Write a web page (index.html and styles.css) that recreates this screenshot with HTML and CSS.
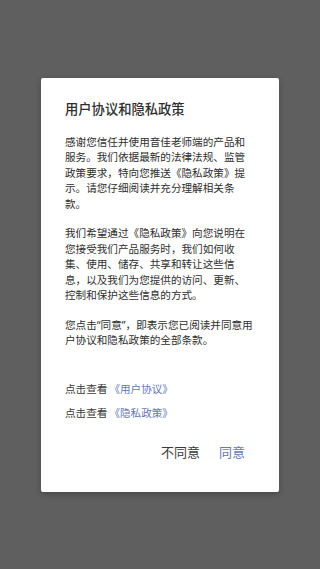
FILE: index.html
```html
<!DOCTYPE html>
<html lang="zh-CN">
<head>
    <meta charset="UTF-8">
    <meta name="viewport" content="width=device-width, initial-scale=1.0">
    <title>用户协议和隐私政策</title>
    <link rel="stylesheet" href="styles.css">
</head>
<body>
    <div class="overlay">
        <div class="dialog">
            <h1 class="dialog-title">用户协议和隐私政策</h1>

            <div class="dialog-body">
                <p>感谢您信任并使用音佳老师端的产品和服务。我们依据最新的法律法规、监管政策要求，特向您推送《隐私政策》提示。请您仔细阅读并充分理解相关条款。</p>
                <p>我们希望通过《隐私政策》向您说明在您接受我们产品服务时，我们如何收集、使用、储存、共享和转让这些信息，以及我们为您提供的访问、更新、控制和保护这些信息的方式。</p>
                <p>您点击“同意”，即表示您已阅读并同意用户协议和隐私政策的全部条款。</p>
            </div>

            <div class="dialog-links">
                <p>点击查看<a href="#">《用户协议》</a></p>
                <p>点击查看<a href="#">《隐私政策》</a></p>
            </div>

            <div class="dialog-actions">
                <a href="#" class="btn btn-cancel">不同意</a>
                <a href="#" class="btn btn-ok">同意</a>
            </div>
        </div>
    </div>
</body>
</html>
```

FILE: styles.css
```css
* {
    margin: 0;
    padding: 0;
    box-sizing: border-box;
}

body {
    /* Latin font first so the curly quotes stay narrow */
    font-family: "Noto Sans", "Noto Sans CJK SC", sans-serif;
    background: #5f5f5f;
    color: #2e2e2e;
}

.overlay {
    min-height: 100vh;
    display: flex;
    align-items: center;
    justify-content: center;
}

.dialog {
    width: 238px;
    height: 414px;
    background: #ffffff;
    border-radius: 2px;
    box-shadow: 0 2px 6px rgba(0, 0, 0, 0.25);
    padding: 23px 24px 0 24px;
}

.dialog-title {
    font-size: 13.3px;
    line-height: 16px;
    font-weight: 500;
    color: #2e2e2e;
    margin-bottom: 18px;
}

.dialog-body p {
    font-size: 10.6px;
    line-height: 15.5px;
    margin-bottom: 14px;
}

.dialog-body p:last-child {
    margin-bottom: 0;
}

.dialog-links {
    margin-top: 32px;
}

.dialog-links p {
    font-size: 10.6px;
    line-height: 16px;
    color: #3a3a3a;
    margin-bottom: 8px;
}

.dialog-links p:last-child {
    margin-bottom: 0;
}

.dialog-links a {
    color: #6679b0;
    text-decoration: none;
    margin-left: 2px;
}

.dialog-actions {
    display: flex;
    justify-content: flex-end;
    gap: 19px;
    margin-top: 23px;
    padding-right: 10px;
}

.btn {
    font-size: 13px;
    line-height: 16px;
    text-decoration: none;
}

.btn-cancel {
    color: #3a3a3a;
}

.btn-ok {
    color: #6679b0;
}
```
